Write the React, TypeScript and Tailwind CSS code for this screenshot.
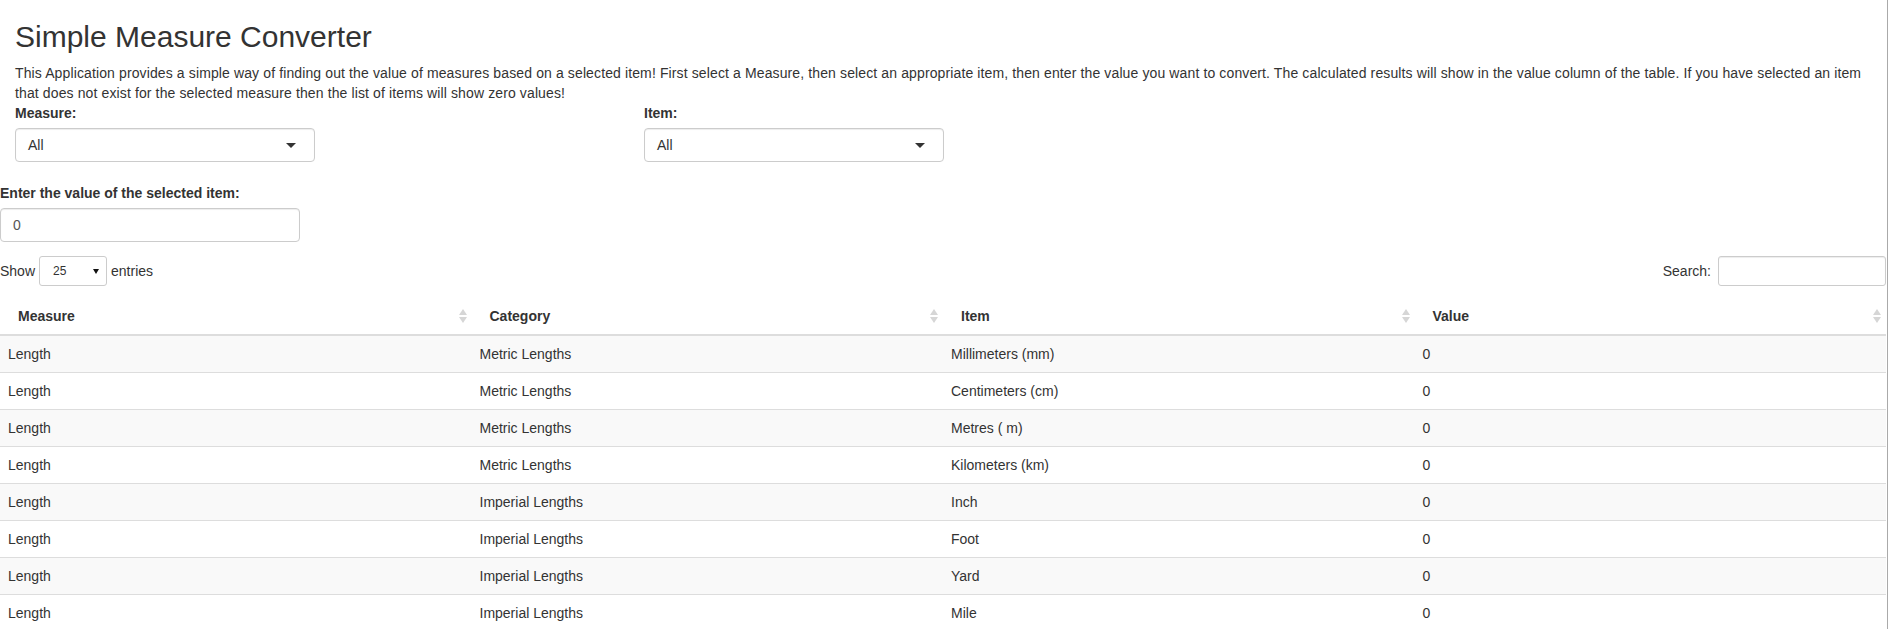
import React from 'react';

const rows = [
  ['Length', 'Metric Lengths', 'Millimeters (mm)', '0'],
  ['Length', 'Metric Lengths', 'Centimeters (cm)', '0'],
  ['Length', 'Metric Lengths', 'Metres ( m)', '0'],
  ['Length', 'Metric Lengths', 'Kilometers (km)', '0'],
  ['Length', 'Imperial Lengths', 'Inch', '0'],
  ['Length', 'Imperial Lengths', 'Foot', '0'],
  ['Length', 'Imperial Lengths', 'Yard', '0'],
  ['Length', 'Imperial Lengths', 'Mile', '0'],
];

const columns = ['Measure', 'Category', 'Item', 'Value'];

const SortIcon = () => (
  <svg width="8" height="14" viewBox="0 0 8 14">
    <polygon points="0,6 4,0 8,6" fill="#d6d6d6" />
    <polygon points="0,8 8,8 4,14" fill="#d6d6d6" />
  </svg>
);

const Caret = () => (
  <svg width="10" height="5" viewBox="0 0 10 5">
    <polygon points="0,0 10,0 5,5" fill="#333" />
  </svg>
);

const SelectBox = ({ label }: { label: string }) => (
  <div>
    <div className="font-bold mb-[5px]">{label}</div>
    <div className="w-[300px] h-[34px] border border-[#ccc] rounded-[4px] bg-white flex items-center justify-between pl-[12px] pr-[18px] shadow-[inset_0_1px_1px_rgba(0,0,0,0.075)]">
      <span>All</span>
      <Caret />
    </div>
  </div>
);

const App = () => {
  return (
    <div className="h-[629px] overflow-hidden bg-white text-[#333] text-[14px] leading-5 font-['Liberation_Sans',Arial,sans-serif]">
      <div className="w-[1888px] h-full border-r border-[#aaa]">
        {/* Header + description */}
        <div className="px-[15px] pt-[20px]">
          <h2 className="text-[30px] leading-[33px] font-normal mb-[10px]">Simple Measure Converter</h2>
          <p className="tracking-[0.12px]">
            This Application provides a simple way of finding out the value of measures based on a selected item! First select a Measure, then select an appropriate item, then enter the value you want to convert. The calculated results will show in the value column of the table. If you have selected an item that does not exist for the selected measure then the list of items will show zero values!
          </p>
          <div className="grid grid-cols-3 -mx-[15px]">
            <div className="px-[15px]">
              <SelectBox label="Measure:" />
            </div>
            <div className="px-[15px]">
              <SelectBox label="Item:" />
            </div>
            <div />
          </div>
        </div>

        {/* Value input */}
        <div className="mt-[21px]">
          <div className="font-bold mb-[5px]">Enter the value of the selected item:</div>
          <div className="w-[300px] h-[34px] border border-[#ccc] rounded-[4px] flex items-center px-[12px] text-[#555] shadow-[inset_0_1px_1px_rgba(0,0,0,0.075)]">
            0
          </div>
        </div>

        {/* Table controls */}
        <div className="mt-[14px] h-[30px] flex items-center justify-between pr-px">
          <div className="flex items-center">
            <span>Show</span>
            <div className="ml-[4px] w-[68px] h-[30px] border border-[#ccc] rounded-[3px] flex items-center justify-between pl-[13px] pr-[7px] text-[12px]">
              <span>25</span>
              <svg width="6" height="5" viewBox="0 0 6 5">
                <polygon points="0,0 6,0 3,5" fill="#111" />
              </svg>
            </div>
            <span className="ml-[4px]">entries</span>
          </div>
          <div className="flex items-center">
            <span>Search:</span>
            <div className="ml-[7px] w-[168px] h-[30px] border border-[#ccc] rounded-[3px] shadow-[inset_0_1px_1px_rgba(0,0,0,0.075)]" />
          </div>
        </div>

        {/* Data table */}
        <table className="mt-[8px] w-[1886px] table-fixed border-collapse">
          <thead>
            <tr className="border-b-2 border-[#ddd]">
              {columns.map((c) => (
                <th key={c} className="p-0 text-left font-bold">
                  <div className="flex items-center justify-between pl-[18px] pr-[5px] pt-[12px] pb-[8px]">
                    <span>{c}</span>
                    <SortIcon />
                  </div>
                </th>
              ))}
            </tr>
          </thead>
          <tbody>
            {rows.map((r, i) => (
              <tr key={i} className={i % 2 === 0 ? 'bg-[#f9f9f9] border-t border-[#ddd]' : 'bg-white border-t border-[#ddd]'}>
                {r.map((cell, j) => (
                  <td key={j} className="h-[37px] px-[8px] py-0 align-middle">
                    {cell}
                  </td>
                ))}
              </tr>
            ))}
          </tbody>
        </table>
      </div>
    </div>
  );
};

export default App;
